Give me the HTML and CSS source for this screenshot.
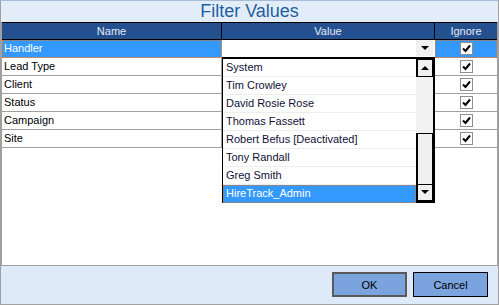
FILE: index.html
```html
<!doctype html>
<html lang="en">
    <head>
        <meta charset="UTF-8" />
        <title>Filter Values</title>
        <link rel="stylesheet" href="styles.css">
    </head>
    <body>
        <div class="dialog">
            <div class="title">Filter Values</div>

            <div class="grid">
                <div class="head">Name</div>
                <div class="head">Value</div>
                <div class="head last">Ignore</div>

                <div class="cell name selected">Handler</div>
                <div class="cell value editor"><span class="drop-btn"><span class="tri down"></span></span></div>
                <div class="cell check selected"><span class="box"><svg width="9" height="9" viewBox="0 0 9 9"><path d="M1 4.5 L3.5 7 L8 1.5" fill="none" stroke="#000" stroke-width="2"/></svg></span></div>

                <div class="cell name">Lead Type</div>
                <div class="cell value"></div>
                <div class="cell check"><span class="box"><svg width="9" height="9" viewBox="0 0 9 9"><path d="M1 4.5 L3.5 7 L8 1.5" fill="none" stroke="#000" stroke-width="2"/></svg></span></div>

                <div class="cell name">Client</div>
                <div class="cell value"></div>
                <div class="cell check"><span class="box"><svg width="9" height="9" viewBox="0 0 9 9"><path d="M1 4.5 L3.5 7 L8 1.5" fill="none" stroke="#000" stroke-width="2"/></svg></span></div>

                <div class="cell name">Status</div>
                <div class="cell value"></div>
                <div class="cell check"><span class="box"><svg width="9" height="9" viewBox="0 0 9 9"><path d="M1 4.5 L3.5 7 L8 1.5" fill="none" stroke="#000" stroke-width="2"/></svg></span></div>

                <div class="cell name">Campaign</div>
                <div class="cell value"></div>
                <div class="cell check"><span class="box"><svg width="9" height="9" viewBox="0 0 9 9"><path d="M1 4.5 L3.5 7 L8 1.5" fill="none" stroke="#000" stroke-width="2"/></svg></span></div>

                <div class="cell name">Site</div>
                <div class="cell value"></div>
                <div class="cell check"><span class="box"><svg width="9" height="9" viewBox="0 0 9 9"><path d="M1 4.5 L3.5 7 L8 1.5" fill="none" stroke="#000" stroke-width="2"/></svg></span></div>

                <!-- open dropdown of the Handler value -->
                <div class="dropdown">
                    <div class="items">
                        <div class="item">System</div>
                        <div class="item">Tim Crowley</div>
                        <div class="item">David Rosie Rose</div>
                        <div class="item">Thomas Fassett</div>
                        <div class="item">Robert Befus [Deactivated]</div>
                        <div class="item">Tony Randall</div>
                        <div class="item">Greg Smith</div>
                        <div class="item active">HireTrack_Admin</div>
                    </div>
                    <div class="scrollbar">
                        <div class="sb-btn"><span class="tri up"></span></div>
                        <div class="sb-track"></div>
                        <div class="sb-thumb"></div>
                        <div class="sb-btn"><span class="tri down"></span></div>
                    </div>
                </div>
            </div>

            <div class="footer">
                <button class="btn default">OK</button>
                <button class="btn">Cancel</button>
            </div>
        </div>
    </body>
</html>
```

FILE: styles.css
```css
* {
    margin: 0;
    padding: 0;
    box-sizing: border-box;
}

body {
    font-family: "Liberation Sans", Arial, sans-serif;
    font-size: 11px;
    background: #fff;
}

.dialog {
    width: 499px;
    height: 305px;
    border: 1px solid #a0a0a0;
    border-top-color: #a8bcd6;
    display: flex;
    flex-direction: column;
    background: #fff;
}

.title {
    height: 21px;
    background: #e3edf9;
    color: #1f5f9f;
    font-size: 18px;
    line-height: 21px;
    text-align: center;
}

.grid {
    height: 243px;
    border-left: 1px solid #a0a0a0;
    border-right: 1px solid #a0a0a0;
    display: grid;
    grid-template-columns: 220px 213px 1fr;
    grid-auto-rows: 18px;
    align-content: start;
    position: relative;
}

.head {
    height: 18px;
    background: #24508f;
    color: #e4eaf4;
    text-align: center;
    line-height: 16px;
    border-top: 1px solid #000;
    border-bottom: 1px solid #000;
    border-right: 1px solid #000;
}

.head.last {
    border-right: none;
}

.cell {
    height: 18px;
    line-height: 17px;
    border-bottom: 1px solid #a0a0a0;
    border-right: 1px solid #a0a0a0;
    color: #000;
}

.cell.name {
    padding-left: 2px;
}

.cell.selected {
    background: #3399ff;
    color: #fff;
    outline: 1px dotted #d9782c;
    outline-offset: -1px;
}

.cell.editor {
    display: flex;
    justify-content: flex-end;
    border-bottom: 1px solid #000;
    border-right: none;
}

.drop-btn {
    width: 17px;
    height: 16px;
    background: #f0f0f0;
    display: flex;
    align-items: center;
    justify-content: center;
    margin-right: 2px;
}

.cell.check {
    display: flex;
    align-items: center;
    justify-content: center;
    border-right: none;
}

.box {
    width: 13px;
    height: 13px;
    border: 1px solid #8e8e8e;
    background: #fff;
    display: flex;
    align-items: center;
    justify-content: center;
}

.tri {
    width: 0;
    height: 0;
    border-left: 4px solid transparent;
    border-right: 4px solid transparent;
}

.tri.down {
    border-top: 4px solid #000;
}

.tri.up {
    border-bottom: 4px solid #000;
}

.dropdown {
    position: absolute;
    left: 220px;
    top: 36px;
    width: 213px;
    height: 145px;
    border: 1px solid #000;
    border-right-width: 2px;
    border-bottom-width: 2px;
    background: #fff;
    display: flex;
}

.items {
    flex: 1;
}

.item {
    height: 18px;
    line-height: 17px;
    padding-left: 3px;
    color: #101038;
    border-bottom: 1px solid #ededed;
}

.item.active {
    background: #3399ff;
    color: #fff;
    border-bottom: none;
    outline: 1px dotted #d9782c;
    outline-offset: -1px;
}

.scrollbar {
    width: 17px;
    display: flex;
    flex-direction: column;
    position: relative;
    background: repeating-conic-gradient(#f7f7f7 0% 25%, #ebebeb 0% 50%) 0 0 / 2px 2px;
}

.sb-btn {
    height: 18px;
    border: 1px solid #000;
    border-width: 1px 1px 1px 2px;
    background: #f0f0f0;
    display: flex;
    align-items: center;
    justify-content: center;
}

.sb-track {
    flex: 1;
}

.sb-thumb {
    position: absolute;
    left: 0;
    right: 0;
    top: 74px;
    height: 52px;
    background: #f0f0f0;
    border: 1px solid #000;
    border-left-width: 2px;
}

.footer {
    flex: 1;
    background: #dfeaf9;
    border-top: 1px solid #a0a0a0;
    display: flex;
    justify-content: flex-end;
    align-items: flex-start;
    gap: 6px;
    padding: 6px 10px 0 0;
}

.btn {
    width: 75px;
    height: 25px;
    background: #7ba3dd;
    border: 1px solid #000;
    font-family: "Liberation Sans", Arial, sans-serif;
    font-size: 11px;
    color: #000;
}

.btn.default {
    border: 2px solid #5a5a5a;
}
```
